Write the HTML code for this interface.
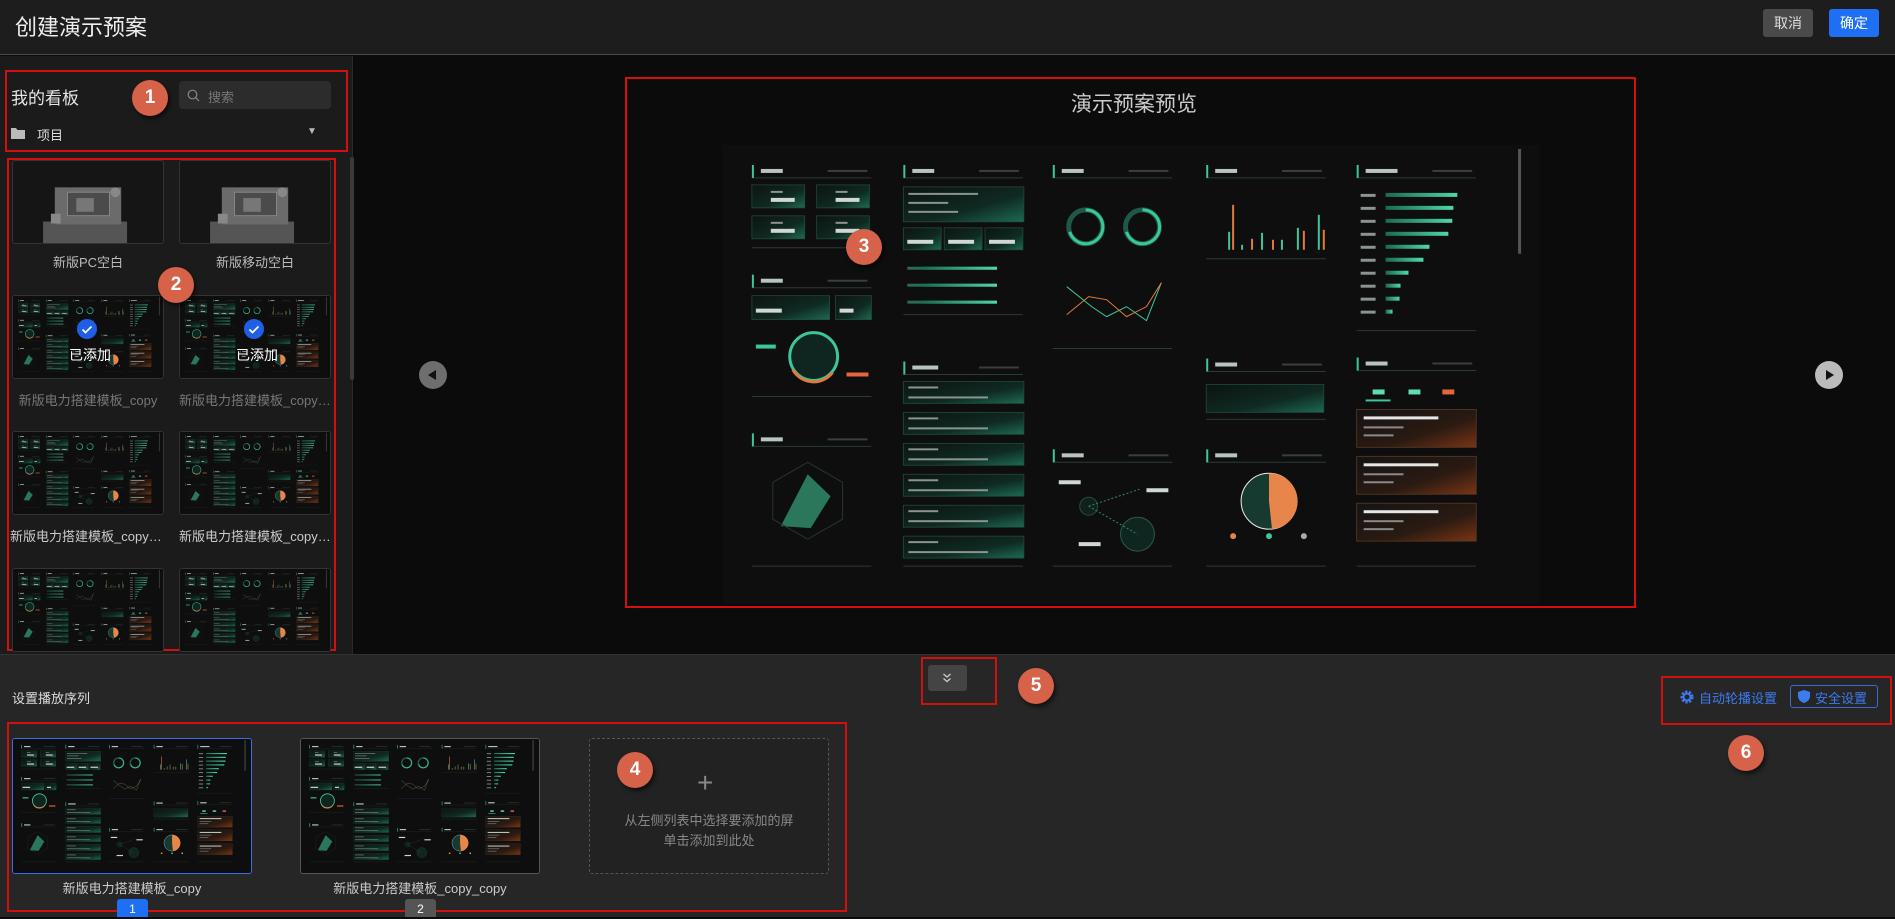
<!DOCTYPE html>
<html><head><meta charset="utf-8">
<style>
*{margin:0;padding:0;box-sizing:border-box}
body{width:1895px;height:917px;overflow:hidden;background:#0b0b0b;font-family:"Liberation Sans","Noto Sans CJK SC",sans-serif;color:#ddd;position:relative}
.abs{position:absolute}
.hdr{left:0;top:0;width:1895px;height:55px;background:#1d1d1d;border-bottom:1px solid #4a4a4a}
.title{left:15px;top:10px;font-size:22px;color:#eee}
.btn{top:9px;height:28px;width:50px;border-radius:3px;font-size:14px;line-height:28px;text-align:center}
.left{left:0;top:56px;width:353px;height:598px;background:#1b1b1b;border-right:1px solid #2a2a2a}
.red{border:2px solid #d21010}
.tile{width:152px;height:84px;background:#151515;border:1px solid #333;border-radius:3px;overflow:hidden}
.lbl{font-size:13px;text-align:center;width:152px;white-space:nowrap;overflow:hidden;text-overflow:ellipsis;color:#bbb}
.mk{width:36px;height:36px;border-radius:50%;background:#d6624a;color:#fff;font-weight:bold;font-size:19px;text-align:center;line-height:36px;box-shadow:2px 3px 4px rgba(0,0,0,.55)}
.bottom{left:0;top:654px;width:1895px;height:263px;background:#262626;border-top:1px solid #333}
svg.th{display:block;width:100%;height:100%}
</style></head><body>
<svg width="0" height="0" style="position:absolute">
<defs>
<linearGradient id="gb" x1="0" x2="1" y1="0" y2="1"><stop offset="0" stop-color="#0d1311"/><stop offset=".6" stop-color="#0f2a22"/><stop offset="1" stop-color="#1d6a52"/></linearGradient>
<linearGradient id="bar" x1="0" x2="1"><stop offset="0" stop-color="#1a6a52"/><stop offset="1" stop-color="#4fd8a6"/></linearGradient>
<linearGradient id="og" x1="0" x2="1" y1="0" y2="1"><stop offset="0" stop-color="#141414"/><stop offset=".6" stop-color="#2a1a12"/><stop offset="1" stop-color="#7a3414"/></linearGradient>
<symbol id="dash" viewBox="0 0 820 460" preserveAspectRatio="none">
<rect width="820" height="460" fill="#0e0e0e"/>
<g fill="none" stroke="#2a3a34" stroke-width="1">
<path d="M29 33h120M181 33h120M331 33h120M485 33h120M636 33h120M29 143h120M181 230h120M331 318h120M485 227h120M485 318h120M636 226h120M29 302h120"/>
<path d="M29 103h120M29 252h120M29 422h120M181 170h120M181 422h120M331 204h120M331 422h120M485 114h120M485 275h120M485 422h120M636 186h120M636 422h120"/>
</g>
<g fill="#3cc79a"><rect x="29" y="20" width="2" height="13"/><rect x="181" y="20" width="2" height="13"/><rect x="331" y="20" width="2" height="13"/><rect x="485" y="20" width="2" height="13"/><rect x="636" y="20" width="2" height="13"/><rect x="29" y="130" width="2" height="13"/><rect x="29" y="289" width="2" height="13"/><rect x="181" y="217" width="2" height="13"/><rect x="331" y="305" width="2" height="13"/><rect x="485" y="214" width="2" height="13"/><rect x="485" y="305" width="2" height="13"/><rect x="636" y="213" width="2" height="13"/></g>
<g fill="#b8c4c0"><rect x="38" y="24" width="22" height="4"/><rect x="190" y="24" width="22" height="4"/><rect x="340" y="24" width="22" height="4"/><rect x="494" y="24" width="22" height="4"/><rect x="645" y="24" width="32" height="4"/><rect x="38" y="134" width="22" height="4"/><rect x="38" y="293" width="22" height="4"/><rect x="190" y="221" width="26" height="4"/><rect x="340" y="309" width="22" height="4"/><rect x="494" y="218" width="22" height="4"/><rect x="494" y="309" width="22" height="4"/><rect x="645" y="217" width="22" height="4"/></g>
<g fill="#3a3f3d"><rect x="105" y="25" width="40" height="2"/><rect x="257" y="25" width="40" height="2"/><rect x="407" y="25" width="40" height="2"/><rect x="561" y="25" width="40" height="2"/><rect x="712" y="25" width="40" height="2"/><rect x="105" y="135" width="40" height="2"/><rect x="105" y="294" width="40" height="2"/><rect x="257" y="222" width="40" height="2"/><rect x="407" y="310" width="40" height="2"/><rect x="561" y="219" width="40" height="2"/><rect x="561" y="310" width="40" height="2"/><rect x="712" y="218" width="40" height="2"/></g>
<g fill="url(#gb)" stroke="#1f4a3c" stroke-width=".8"><rect x="29" y="40" width="53" height="23"/><rect x="94" y="40" width="53" height="23"/><rect x="29" y="71" width="53" height="23"/><rect x="94" y="71" width="53" height="23"/><rect x="29" y="151" width="78" height="24"/><rect x="113" y="151" width="36" height="24"/>
<rect x="181" y="42" width="121" height="35"/><rect x="181" y="83" width="38" height="22"/><rect x="222" y="83" width="38" height="22"/><rect x="263" y="83" width="38" height="22"/>
<rect x="181" y="237" width="121" height="22"/><rect x="181" y="268" width="121" height="22"/><rect x="181" y="299" width="121" height="22"/><rect x="181" y="330" width="121" height="22"/><rect x="181" y="361" width="121" height="22"/><rect x="181" y="392" width="121" height="22"/>
<rect x="485" y="240" width="118" height="28"/></g>
<g fill="#d0d8d4"><rect x="48" y="53" width="24" height="4"/><rect x="113" y="53" width="24" height="4"/><rect x="48" y="84" width="24" height="4"/><rect x="113" y="84" width="24" height="4"/><rect x="33" y="164" width="26" height="4"/><rect x="117" y="164" width="14" height="4"/><rect x="185" y="95" width="26" height="4"/><rect x="226" y="95" width="26" height="4"/><rect x="267" y="95" width="26" height="4"/><rect x="337" y="336" width="22" height="4"/><rect x="425" y="344" width="22" height="4"/><rect x="357" y="398" width="22" height="4"/></g>
<g fill="#8a9490"><rect x="48" y="46" width="12" height="2"/><rect x="113" y="46" width="12" height="2"/><rect x="48" y="77" width="12" height="2"/><rect x="113" y="77" width="12" height="2"/><rect x="186" y="48" width="70" height="2"/><rect x="186" y="57" width="40" height="2"/><rect x="186" y="66" width="50" height="2"/>
<rect x="186" y="242" width="30" height="2"/><rect x="186" y="273" width="30" height="2"/><rect x="186" y="304" width="30" height="2"/><rect x="186" y="335" width="30" height="2"/><rect x="186" y="366" width="30" height="2"/><rect x="186" y="397" width="30" height="2"/>
<rect x="186" y="252" width="80" height="2"/><rect x="186" y="283" width="80" height="2"/><rect x="186" y="314" width="80" height="2"/><rect x="186" y="345" width="80" height="2"/><rect x="186" y="376" width="80" height="2"/><rect x="186" y="407" width="80" height="2"/>
<rect x="640" y="49" width="15" height="3"/><rect x="640" y="62" width="15" height="3"/><rect x="640" y="75" width="15" height="3"/><rect x="640" y="88" width="15" height="3"/><rect x="640" y="101" width="15" height="3"/><rect x="640" y="114" width="15" height="3"/><rect x="640" y="127" width="15" height="3"/><rect x="640" y="140" width="15" height="3"/><rect x="640" y="153" width="15" height="3"/><rect x="640" y="166" width="15" height="3"/></g>
<g fill="#2a6a56"><rect x="185" y="122" width="90" height="3"/><rect x="185" y="139" width="90" height="3"/><rect x="185" y="156" width="90" height="3"/></g>
<g fill="url(#bar)"><rect x="200" y="122" width="75" height="3"/><rect x="200" y="139" width="75" height="3"/><rect x="200" y="156" width="75" height="3"/>
<rect x="665" y="48" width="72" height="4"/><rect x="665" y="61" width="68" height="4"/><rect x="665" y="74" width="67" height="4"/><rect x="665" y="87" width="63" height="4"/><rect x="665" y="100" width="44" height="4"/><rect x="665" y="113" width="38" height="4"/><rect x="665" y="126" width="23" height="4"/><rect x="665" y="139" width="15" height="4"/><rect x="665" y="152" width="14" height="4"/><rect x="665" y="165" width="7" height="4"/></g>
<g fill="none" stroke-width="5"><circle cx="364" cy="82" r="17" stroke="#1d5848"/><circle cx="421" cy="82" r="17" stroke="#1d5848"/><path d="M364 65a17 17 0 1 1-16 22" stroke="#3cc79a" stroke-width="3"/><path d="M421 65a17 17 0 1 1-16 22" stroke="#3cc79a" stroke-width="3"/></g>
<circle cx="91" cy="212" r="24" fill="#0f2520" stroke="#3cc79a" stroke-width="3"/><path d="M70 225a24 24 0 0 0 40 3" stroke="#e17a3e" stroke-width="3" fill="none"/>
<rect x="33" y="200" width="20" height="4" fill="#3cc79a"/><rect x="124" y="228" width="22" height="4" fill="#e8643c"/>
<polygon points="85,330 108,352 88,384 58,382" fill="#2f8a6a" opacity=".85"/><polygon points="85,318 120,338 120,375 85,395 50,375 50,338" fill="none" stroke="#253530"/>
<polyline points="345,142 370,162 385,172 405,162 425,176 440,138" fill="none" stroke="#3cc79a" stroke-width="1"/><polyline points="345,170 367,152 385,155 405,172 425,162 440,138" fill="none" stroke="#e17a3e" stroke-width="1"/>
<g fill="#3cc79a"><rect x="507" y="87" width="2" height="18"/><rect x="520" y="100" width="2" height="5"/><rect x="540" y="88" width="2" height="17"/><rect x="560" y="95" width="2" height="10"/><rect x="576" y="83" width="2" height="22"/><rect x="597" y="70" width="2" height="35"/></g>
<g fill="#e17a3e"><rect x="511" y="60" width="2" height="45"/><rect x="530" y="94" width="2" height="11"/><rect x="551" y="95" width="2" height="10"/><rect x="582" y="86" width="2" height="19"/><rect x="602" y="85" width="2" height="20"/></g>
<circle cx="548" cy="357" r="28" fill="#173a30" stroke="#eee" stroke-width="1"/><path d="M548 357V329a28 28 0 0 1 26 16 28 28 0 0 1-23 40z" fill="#e8854a"/>
<g fill="#e8854a"><circle cx="512" cy="392" r="3"/></g><g fill="#3cc79a"><circle cx="548" cy="392" r="3"/></g><g fill="#aaa"><circle cx="583" cy="392" r="3"/></g>
<circle cx="367" cy="362" r="9" fill="#10201c" stroke="#2a4a40"/><circle cx="416" cy="390" r="17" fill="#0f2520" stroke="#2a5a4a"/><path d="M367 362L418 345M367 362L416 390" stroke="#2f8a6a" stroke-dasharray="2 2"/>
<g fill="url(#og)" stroke="#5a3a24" stroke-width=".8"><rect x="636" y="265" width="120" height="38"/><rect x="636" y="312" width="120" height="38"/><rect x="636" y="359" width="120" height="38"/></g>
<g fill="#e6e6e6"><rect x="643" y="272" width="75" height="3"/><rect x="643" y="319" width="75" height="3"/><rect x="643" y="366" width="75" height="3"/></g>
<g fill="#8a8a8a"><rect x="643" y="282" width="40" height="2"/><rect x="643" y="329" width="40" height="2"/><rect x="643" y="376" width="40" height="2"/><rect x="643" y="290" width="30" height="2"/><rect x="643" y="337" width="30" height="2"/><rect x="643" y="384" width="30" height="2"/></g>
<g fill="#5fdcb0"><rect x="652" y="245" width="12" height="5"/><rect x="688" y="245" width="12" height="5"/></g><rect x="722" y="245" width="12" height="5" fill="#e8643c"/><rect x="645" y="255" width="25" height="2" fill="#3cc79a"/>
<rect x="798" y="4" width="3" height="105" fill="#555"/>
</symbol>
</defs></svg>

<div class="abs hdr"></div>
<div class="abs title">创建演示预案</div>
<div class="abs btn" style="left:1763px;background:#4a4a4a;color:#ddd">取消</div>
<div class="abs btn" style="left:1829px;background:#1f6ff5;color:#fff">确定</div>

<div class="abs left"></div>
<div class="abs red" style="left:5px;top:70px;width:343px;height:82px"></div>
<div class="abs" style="left:11px;top:84px;font-size:17px;color:#e6e6e6">我的看板</div>
<div class="abs" style="left:179px;top:81px;width:152px;height:28px;background:#2c2c2c;border-radius:4px"></div>
<svg class="abs" style="left:187px;top:89px" width="13" height="13"><circle cx="5.5" cy="5.5" r="4.3" fill="none" stroke="#888" stroke-width="1.2"/><path d="M8.6 8.6L12 12" stroke="#888" stroke-width="1.2"/></svg>
<div class="abs" style="left:208px;top:87px;font-size:13px;color:#777">搜索</div>
<svg class="abs" style="left:11px;top:127px" width="14" height="12"><path d="M0 1h5l1.5 2H14v9H0z" fill="#bbb"/></svg>
<div class="abs" style="left:37px;top:125px;font-size:13px;color:#ddd">项目</div>
<div class="abs" style="left:307px;top:126px;font-size:10px;color:#bbb">▼</div>

<div class="abs red" style="left:7px;top:158px;width:329px;height:493px"></div>
<div class="abs" style="left:350px;top:157px;width:4px;height:223px;background:#3a3a3a;border-radius:2px"></div>

<div class="abs tile" style="left:12px;top:160px">
<svg class="th" viewBox="0 0 152 84"><rect x="30" y="62" width="86" height="22" fill="#555"/><rect x="42" y="27" width="68" height="38" fill="#6b6b6b"/><rect x="55" y="32" width="43" height="24" fill="#4b4b4b" stroke="#888"/><rect x="64" y="38" width="18" height="14" fill="#777"/><circle cx="104" cy="32" r="5" fill="#888"/><rect x="38" y="54" width="10" height="10" fill="#888"/></svg></div>
<div class="abs tile" style="left:179px;top:160px">
<svg class="th" viewBox="0 0 152 84"><rect x="30" y="62" width="86" height="22" fill="#555"/><rect x="42" y="27" width="68" height="38" fill="#6b6b6b"/><rect x="55" y="32" width="43" height="24" fill="#4b4b4b" stroke="#888"/><rect x="64" y="38" width="18" height="14" fill="#777"/><circle cx="104" cy="32" r="5" fill="#888"/><rect x="38" y="54" width="10" height="10" fill="#888"/></svg></div>
<div class="abs lbl" style="left:12px;top:252px">新版PC空白</div>
<div class="abs lbl" style="left:179px;top:252px">新版移动空白</div>

<div class="abs tile" style="left:12px;top:295px"><svg class="th"><use href="#dash" width="100%" height="100%"/></svg></div>
<div class="abs tile" style="left:179px;top:295px"><svg class="th"><use href="#dash" width="100%" height="100%"/></svg></div>
<svg class="abs" style="left:77px;top:319px" width="20" height="20"><circle cx="10" cy="10" r="10" fill="#1f5fe6"/><path d="M5.5 10.5l3 3 6-6" stroke="#fff" stroke-width="1.8" fill="none"/></svg>
<svg class="abs" style="left:244px;top:319px" width="20" height="20"><circle cx="10" cy="10" r="10" fill="#1f5fe6"/><path d="M5.5 10.5l3 3 6-6" stroke="#fff" stroke-width="1.8" fill="none"/></svg>
<div class="abs" style="left:69px;top:345px;font-size:14px;color:#fff">已添加</div>
<div class="abs" style="left:236px;top:345px;font-size:14px;color:#fff">已添加</div>
<div class="abs lbl" style="left:12px;top:390px;color:#777">新版电力搭建模板_copy</div>
<div class="abs lbl" style="left:179px;top:390px;color:#777">新版电力搭建模板_copy_copy</div>

<div class="abs tile" style="left:12px;top:431px"><svg class="th"><use href="#dash" width="100%" height="100%"/></svg></div>
<div class="abs tile" style="left:179px;top:431px"><svg class="th"><use href="#dash" width="100%" height="100%"/></svg></div>
<div class="abs lbl" style="left:10px;top:526px;color:#ccc">新版电力搭建模板_copy_copy</div>
<div class="abs lbl" style="left:179px;top:526px;color:#ccc">新版电力搭建模板_copy_copy</div>

<div class="abs tile" style="left:12px;top:568px"><svg class="th"><use href="#dash" width="100%" height="100%"/></svg></div>
<div class="abs tile" style="left:179px;top:568px"><svg class="th"><use href="#dash" width="100%" height="100%"/></svg></div>

<div class="abs red" style="left:625px;top:77px;width:1011px;height:531px"></div>
<div class="abs" style="left:1071px;top:88px;font-size:21px;color:#ccc">演示预案预览</div>
<div class="abs" style="left:723px;top:145px;width:817px;height:459px"><svg class="th"><use href="#dash" width="100%" height="100%"/></svg></div>
<svg class="abs" style="left:419px;top:361px" width="28" height="28"><circle cx="14" cy="14" r="14" fill="#6e6e6e"/><path d="M9 14l8-5v10z" fill="#111"/></svg>
<svg class="abs" style="left:1815px;top:361px" width="28" height="28"><circle cx="14" cy="14" r="14" fill="#bbb"/><path d="M19 14l-8-5v10z" fill="#111"/></svg>

<div class="abs bottom"></div>
<div class="abs red" style="left:921px;top:657px;width:76px;height:48px"></div>
<div class="abs" style="left:928px;top:665px;width:39px;height:26px;background:#444;border-radius:3px"></div>
<svg class="abs" style="left:942px;top:672px" width="10" height="12"><path d="M1.5 2l3.5 3 3.5-3M1.5 6.5l3.5 3 3.5-3" stroke="#ccc" stroke-width="1.3" fill="none"/></svg>
<div class="abs" style="left:12px;top:688px;font-size:13px;color:#ddd">设置播放序列</div>
<div class="abs red" style="left:7px;top:722px;width:840px;height:190px"></div>
<div class="abs" style="left:12px;top:738px;width:240px;height:136px;border:1px solid #3b6fe0;border-radius:3px;overflow:hidden"><svg class="th"><use href="#dash" width="100%" height="100%"/></svg></div>
<div class="abs" style="left:300px;top:738px;width:240px;height:136px;border:1px solid #555;border-radius:3px;overflow:hidden"><svg class="th"><use href="#dash" width="100%" height="100%"/></svg></div>
<div class="abs" style="left:589px;top:738px;width:240px;height:136px;border:1px dashed #555;border-radius:3px;background:#222"></div>
<div class="abs" style="left:697px;top:767px;font-size:28px;color:#888;font-weight:200">+</div>
<div class="abs" style="left:589px;top:811px;width:240px;text-align:center;font-size:13px;color:#888;line-height:20px">从左侧列表中选择要添加的屏<br>单击添加到此处</div>
<div class="abs" style="left:12px;top:878px;width:240px;text-align:center;font-size:13px;color:#ccc">新版电力搭建模板_copy</div>
<div class="abs" style="left:300px;top:878px;width:240px;text-align:center;font-size:13px;color:#ccc">新版电力搭建模板_copy_copy</div>
<div class="abs" style="left:117px;top:899px;width:31px;height:18px;background:#1f6ff5;border-radius:3px 3px 0 0;color:#fff;font-size:12px;text-align:center;line-height:20px">1</div>
<div class="abs" style="left:405px;top:899px;width:31px;height:18px;background:#555;border-radius:3px 3px 0 0;color:#fff;font-size:12px;text-align:center;line-height:20px">2</div>

<div class="abs red" style="left:1661px;top:676px;width:231px;height:49px"></div>
<svg class="abs" style="left:1680px;top:690px" width="14" height="14" viewBox="0 0 14 14"><circle cx="7" cy="7" r="5" fill="none" stroke="#3c7bf0" stroke-width="3" stroke-dasharray="2.2 1.4"/><circle cx="7" cy="7" r="3.5" fill="none" stroke="#3c7bf0" stroke-width="2"/></svg>
<div class="abs" style="left:1699px;top:688px;font-size:13px;color:#3c7bf0">自动轮播设置</div>
<div class="abs" style="left:1790px;top:685px;width:88px;height:23px;border:1px solid #3c6ad0;border-radius:3px"></div>
<svg class="abs" style="left:1798px;top:690px" width="12" height="13"><path d="M6 0l6 2v4c0 4-3 6-6 7C3 12 0 10 0 6V2z" fill="#3c7bf0"/></svg>
<div class="abs" style="left:1815px;top:688px;font-size:13px;color:#3c7bf0">安全设置</div>

<div class="abs mk" style="left:132px;top:80px">1</div>
<div class="abs mk" style="left:158px;top:267px">2</div>
<div class="abs mk" style="left:846px;top:229px">3</div>
<div class="abs mk" style="left:617px;top:752px">4</div>
<div class="abs mk" style="left:1018px;top:668px">5</div>
<div class="abs mk" style="left:1728px;top:735px">6</div>
</body></html>
